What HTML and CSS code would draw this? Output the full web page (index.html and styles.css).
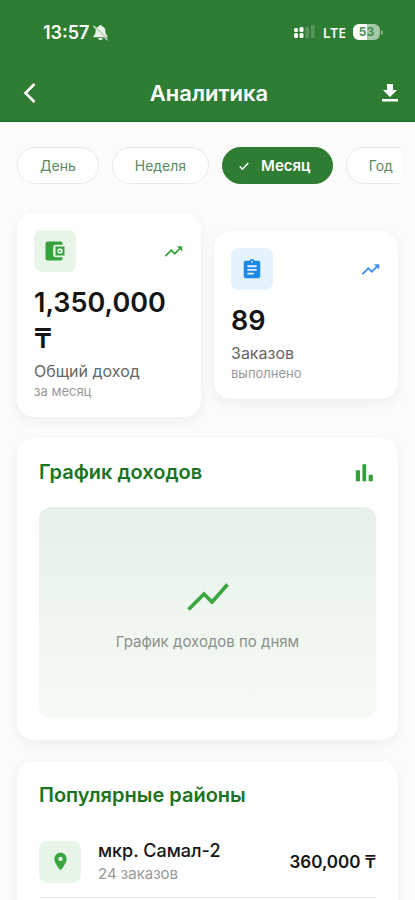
FILE: index.html
```html
<!DOCTYPE html>
<html lang="ru">
<head>
<meta charset="utf-8">
<meta name="viewport" content="width=device-width, initial-scale=1">
<title>Аналитика</title>
<link rel="stylesheet" href="styles.css">
</head>
<body>
<div class="app">
  <header class="header">
    <div class="status">
      <div class="status-side">
        <span class="time">13:57</span>
        <svg class="bell" viewBox="0 0 18 18" aria-hidden="true">
          <path d="M9 1c-1 0-1.600.6-1.600 1.400C5 3.100 3.800 5.100 3.800 7.500c0 3-.8 4-2.300 5.200V14h15v-1.300c-1.500-1.200-2.300-2.200-2.300-5.200 0-2.400-1.200-4.400-3.600-5.100C10.600 1.600 10 1 9 1z" fill="#e9f1e9"/>
          <path d="M6.500 14.800h5c-.2 1.300-1.200 2.200-2.500 2.200s-2.300-.9-2.500-2.200z" fill="#e9f1e9"/>
          <path d="M2.500 1.800 16.800 16" stroke="#7fae82" stroke-width="1"/>
          <path d="M1.600 2.400 16 16.800" stroke="#d5e4d6" stroke-width="1.200" stroke-linecap="round"/>
        </svg>
      </div>
      <div class="status-side status-right">
        <svg class="signal" viewBox="0 0 22 14" aria-hidden="true">
          <g fill="#fff"><rect x="0" y="3" width="4" height="4" rx="1.500"/><rect x="0" y="8" width="4" height="5" rx="1.500"/><rect x="5.500" y="2" width="4" height="5" rx="1.500"/><rect x="5.500" y="8" width="4" height="5" rx="1.500"/></g>
          <g fill="#fff" opacity=".2"><rect x="11.500" y="2" width="3.500" height="11" rx="1"/><rect x="17" y="0" width="3.500" height="13" rx="1"/></g>
        </svg>
        <span class="network">LTE</span>
        <span class="battery"><span class="battery-body"><span class="battery-on">5</span><span class="battery-off">3</span></span><span class="battery-cap"></span></span>
      </div>
    </div>
    <div class="appbar">
      <button class="icon-button" type="button" aria-label="Назад">
        <svg class="back" viewBox="0 0 14 22" aria-hidden="true"><path d="M11.500 2 2.500 11l9 9" fill="none" stroke="#fff" stroke-width="2.600"/></svg>
      </button>
      <h1 class="title">Аналитика</h1>
      <button class="icon-button icon-end" type="button" aria-label="Скачать">
        <svg class="icon-24" viewBox="0 0 24 24" aria-hidden="true"><path d="M19 9h-4V3H9v6H5l7 7 7-7zM4 18v2.400h16V18z" fill="#fff"/></svg>
      </button>
    </div>
  </header>

  <main class="content">
    <nav class="filters" aria-label="Период">
      <button class="chip" type="button">День</button>
      <button class="chip" type="button">Неделя</button>
      <button class="chip chip-active" type="button" aria-pressed="true">
        <svg class="check" viewBox="0 0 14 14" aria-hidden="true"><path d="m2 7.500 3.200 3.200L12 3.500" fill="none" stroke="#fff" stroke-width="1.800"/></svg>
        Месяц
      </button>
      <button class="chip" type="button">Год</button>
    </nav>

    <section class="stats">
      <article class="card stat">
        <div class="stat-top">
          <span class="tile tile-green">
            <svg class="icon-24" viewBox="0 0 24 24" aria-hidden="true"><path d="M4.500 2.500h13a2 2 0 0 1 2 2v1.300h-7a2.300 2.300 0 0 0-2.300 2.300v7.800a2.300 2.300 0 0 0 2.300 2.300h7v1.300a2 2 0 0 1-2 2h-13a2 2 0 0 1-2-2v-15a2 2 0 0 1 2-2z" fill="#35a33c"/><path d="M12.500 7.500h9v9h-9z" fill="#35a33c"/><rect x="14.500" y="9.500" width="5" height="5" rx="1.500" fill="#e8f5e9"/><circle cx="16.700" cy="12" r="1" fill="#35a33c"/></svg>
          </span>
          <svg class="trend trend-green" viewBox="0 0 24 24" aria-hidden="true"><path d="m16 6 2.290 2.290-4.880 4.880-4-4L2 16.590 3.410 18l6-6 4 4 6.300-6.290L22 12V6z"/></svg>
        </div>
        <p class="value">1,350,000 ₸</p>
        <p class="label">Общий доход</p>
        <p class="sub">за месяц</p>
      </article>
      <article class="card stat">
        <div class="stat-top">
          <span class="tile tile-blue">
            <svg class="icon-22" viewBox="0 0 24 24" aria-hidden="true"><path d="M19 3h-4.180C14.400 1.840 13.300 1 12 1s-2.400.84-2.820 2H5c-1.100 0-2 .9-2 2v15c0 1.100.9 2 2 2h14c1.100 0 2-.9 2-2V5c0-1.100-.9-2-2-2zm-7 0c.55 0 1 .45 1 1s-.45 1-1 1-1-.45-1-1 .45-1 1-1zm2 15H7v-2h7zm3-4H7v-2h10zm0-4H7V8h10z" fill="#1e88e5"/></svg>
          </span>
          <svg class="trend trend-blue" viewBox="0 0 24 24" aria-hidden="true"><path d="m16 6 2.290 2.290-4.880 4.880-4-4L2 16.590 3.410 18l6-6 4 4 6.300-6.290L22 12V6z"/></svg>
        </div>
        <p class="value">89</p>
        <p class="label">Заказов</p>
        <p class="sub">выполнено</p>
      </article>
    </section>

    <section class="card panel">
      <div class="panel-head">
        <h2 class="heading">График доходов</h2>
        <svg class="icon-22" viewBox="0 0 24 24" aria-hidden="true"><path d="M2 9h4.500v12H2zM9.200 2.500h4V21h-4zM16 14h4.500v7H16z" fill="#2fa136"/></svg>
      </div>
      <div class="chart">
        <svg class="chart-icon" viewBox="0 0 48 48" aria-hidden="true"><path d="m4.500 36.500 15.500-15.500 8 8L43.500 11.500" fill="none" stroke="#3aa640" stroke-width="3.600"/></svg>
        <p class="chart-text">График доходов по дням</p>
      </div>
    </section>

    <section class="card panel">
      <div class="panel-head">
        <h2 class="heading">Популярные районы</h2>
      </div>
      <ul class="districts">
        <li class="district">
          <span class="tile tile-green">
            <svg class="pin" viewBox="0 0 24 24" aria-hidden="true"><path d="M12 2C8.130 2 5 5.130 5 9c0 5.250 7 13 7 13s7-7.750 7-13c0-3.870-3.130-7-7-7zm0 9.500a2.500 2.500 0 1 1 0-5 2.500 2.500 0 0 1 0 5z" fill="#3aa640"/></svg>
          </span>
          <div class="district-text">
            <p class="district-name">мкр. Самал-2</p>
            <p class="district-count">24 заказов</p>
          </div>
          <span class="amount">360,000 ₸</span>
        </li>
      </ul>
    </section>
  </main>
</div>
</body>
</html>
```
FILE: styles.css
```css
* {
  box-sizing: border-box;
}

body {
  margin: 0;
  background: #fafbfa;
  color: #151515;
  font-family: Inter, Roboto, "Liberation Sans", sans-serif;
}

h1, h2, p, ul {
  margin: 0;
  padding: 0;
}

button {
  font: inherit;
  cursor: pointer;
}

svg {
  display: block;
  flex: none;
}

.app {
  display: flex;
  flex-direction: column;
  height: 100vh;
  overflow: hidden;
}

.header {
  flex: none;
  background: #2e7d32;
  color: #fff;
  border-bottom: 1px solid #14691a;
}

.status {
  display: flex;
  justify-content: space-between;
  align-items: center;
  height: 64px;
  padding: 0 32px 0 43px;
}

.status-side {
  display: flex;
  align-items: center;
  gap: 2px;
}

.status-right {
  gap: 7px;
}

.time {
  font-size: 18px;
  font-weight: 600;
}

.bell {
  width: 17px;
  height: 17px;
}

.signal {
  width: 22px;
  height: 14px;
}

.network {
  font-family: "Open Sans", sans-serif;
  font-size: 14px;
  font-weight: 600;
}

.battery {
  display: flex;
  align-items: center;
  gap: 1px;
}

.battery-body {
  display: flex;
  width: 27px;
  height: 16px;
  border-radius: 6px;
  overflow: hidden;
  font-size: 12px;
  font-weight: 700;
  line-height: 16px;
}

.battery-on {
  flex: 1;
  background: #fff;
  color: #4c8f50;
  text-align: right;
}

.battery-off {
  flex: 1;
  background: #a5c9a7;
  color: #4c8f50;
}

.battery-cap {
  width: 2px;
  height: 5px;
  border-radius: 0 2px 2px 0;
  background: #80b082;
}

.appbar {
  display: grid;
  grid-template-columns: 48px 1fr 48px;
  align-items: center;
  height: 57px;
  padding: 0 13px 0 16px;
}

.icon-button {
  display: flex;
  align-items: center;
  height: 48px;
  padding: 0 7px;
  border: 0;
  background: none;
}

.icon-end {
  justify-content: flex-end;
  padding: 0;
}

.back {
  width: 14px;
  height: 22px;
}

.icon-24 {
  width: 24px;
  height: 24px;
}

.icon-22 {
  width: 22px;
  height: 22px;
}

.title {
  text-align: center;
  font-size: 22px;
  font-weight: 600;
}

.content {
  display: flex;
  flex-direction: column;
  gap: 21px;
  padding: 25px 17px;
}

.filters {
  display: flex;
  gap: 13px;
  margin-right: -3px;
  margin-bottom: 8px;
  overflow: hidden;
  flex: none;
}

.chip {
  display: flex;
  flex: none;
  align-items: center;
  gap: 11px;
  height: 37px;
  padding: 0 22px;
  border: 1px solid #e6ebe6;
  border-radius: 19px;
  background: #fff;
  color: #5d8a60;
  font-size: 14px;
}

.chip-active {
  padding: 0 21px 0 15px;
  border-color: #2e7d32;
  background: #2e7d32;
  color: #fff;
  font-size: 15px;
  font-weight: 600;
}

.check {
  width: 12px;
  height: 12px;
}

.card {
  border-radius: 17px;
  background: #fff;
  box-shadow: 0 4px 12px rgba(30, 60, 30, 0.06);
}

.stats {
  display: grid;
  grid-template-columns: 1fr 1fr;
  align-items: center;
  gap: 13px;
}

.stat {
  padding: 17px;
}

.stat-top {
  display: flex;
  justify-content: space-between;
  align-items: center;
  margin-bottom: 13px;
}

.tile {
  display: flex;
  flex: none;
  align-items: center;
  justify-content: center;
  width: 42px;
  height: 42px;
  border-radius: 8px;
}

.tile-green {
  background: #e8f5e9;
}

.tile-blue {
  background: #e3f2fd;
}

.trend {
  width: 21px;
  height: 21px;
}

.trend-green {
  fill: #35a33c;
}

.trend-blue {
  fill: #3b8df0;
}

.value {
  margin-bottom: 4px;
  font-size: 27px;
  font-weight: 600;
  line-height: 36px;
}

.label {
  color: #666;
  font-size: 16px;
  line-height: 21px;
}

.sub {
  color: #999;
  font-size: 13px;
  line-height: 18px;
}

.panel {
  padding: 22px;
}

.panel-head {
  display: flex;
  justify-content: space-between;
  align-items: center;
  margin-bottom: 22px;
}

.heading {
  color: #1b7423;
  font-size: 20px;
  font-weight: 600;
  line-height: 25px;
}

.chart {
  display: flex;
  flex-direction: column;
  align-items: center;
  justify-content: center;
  gap: 10px;
  height: 211px;
  border-radius: 12px;
  background: linear-gradient(#e7f1e9, #eef6ef 50%, #f5faf5);
}

.chart-icon {
  width: 48px;
  height: 48px;
}

.chart-text {
  color: #8b918b;
  font-size: 15px;
  line-height: 21px;
}

.districts {
  list-style: none;
}

.district {
  display: flex;
  align-items: center;
  gap: 17px;
  padding: 9px 0 13px;
  border-bottom: 1px solid #e6e6e6;
}

.pin {
  width: 21px;
  height: 21px;
}

.district-text {
  flex: 1;
}

.district-name {
  font-size: 18px;
  font-weight: 500;
  line-height: 24px;
}

.district-count {
  color: #999;
  font-size: 15px;
  line-height: 21px;
}

.amount {
  font-size: 17px;
  font-weight: 600;
}
```
